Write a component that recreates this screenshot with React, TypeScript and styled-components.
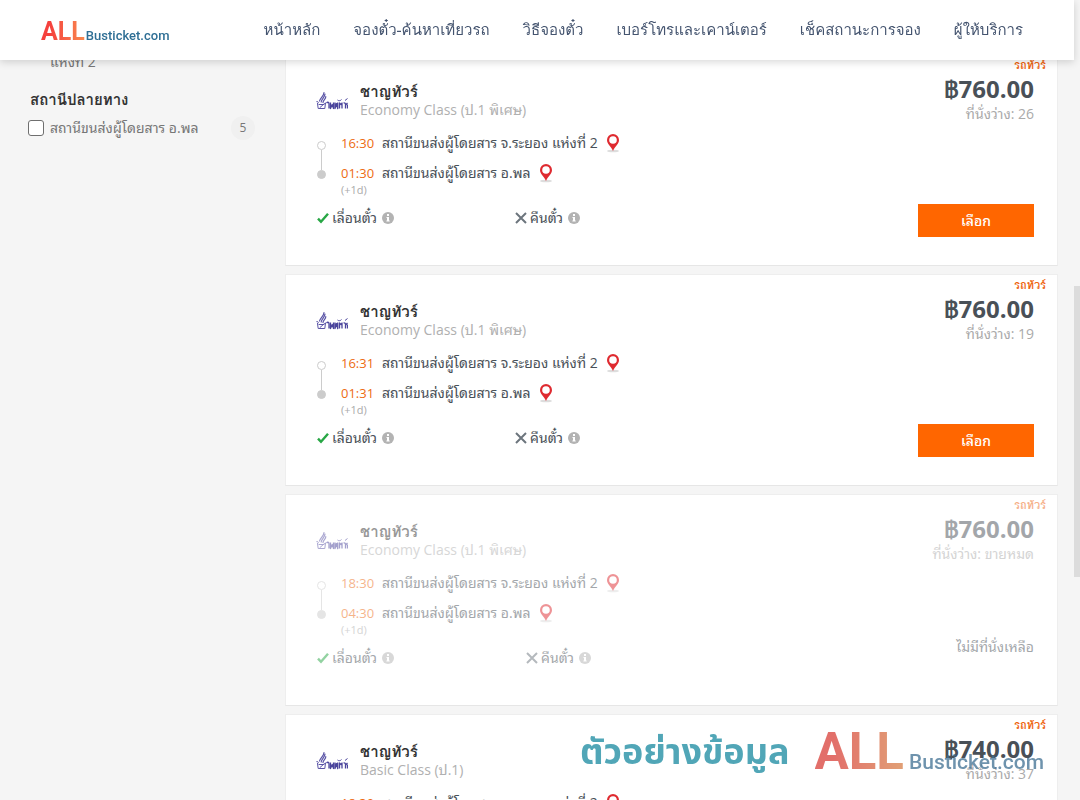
import React from "react";
import styled, { createGlobalStyle } from "styled-components";

const GlobalStyle = createGlobalStyle`
  *, *::before, *::after { box-sizing: border-box; }
  body {
    margin: 0;
    background: #f5f5f5;
    color: #495057;
    font-family: "Open Sans", "Noto Sans Thai Looped", Loma, sans-serif;
    font-size: 14px;
    line-height: 20px;
  }
`;

const Page = styled.div`
  height: 100vh;
  overflow: hidden;
  padding-right: 6px;
`;

const Header = styled.header`
  position: fixed;
  top: 0;
  left: 0;
  right: 6px;
  z-index: 10;
  display: flex;
  align-items: center;
  justify-content: space-between;
  height: 60px;
  padding: 0 51px 0 41px;
  background: #fff;
  box-shadow: 0 2px 8px rgba(0, 0, 0, 0.16);
`;

const Nav = styled.nav`
  display: flex;
  gap: 33px;
`;

const NavLink = styled.a`
  color: #44546f;
  font-family: Loma, sans-serif;
  font-size: 15px;
  line-height: 26px;
  text-decoration: none;
  white-space: nowrap;
`;

const Brand = styled.span<{ $large?: boolean }>`
  display: flex;
  align-items: baseline;
  gap: ${(p) => (p.$large ? 5 : 1)}px;
  padding-top: ${(p) => (p.$large ? 0 : 2)}px;
  font-family: Roboto, sans-serif;
  font-weight: 700;
  line-height: 1;
  text-decoration: none;
`;

const BrandAll = styled.span<{ $large?: boolean }>`
  font-size: ${(p) => (p.$large ? 51 : 25)}px;
  color: transparent;
  background: ${(p) =>
    p.$large
      ? "linear-gradient(90deg, #d83f39 20%, #d78148)"
      : "linear-gradient(90deg, #f5413d 20%, #f98a4f)"};
  background-clip: text;
  -webkit-background-clip: text;
`;

const BrandName = styled.span<{ $large?: boolean }>`
  font-size: ${(p) => (p.$large ? 21 : 13)}px;
  font-weight: 500;
  color: ${(p) => (p.$large ? "#3e6f92" : "#2f6f95")};
`;

const Layout = styled.div`
  display: grid;
  grid-template-columns: 255px minmax(0, 1fr);
  gap: 30px;
  padding: 54px 16px 0 0;
`;

const Sidebar = styled.aside`
  padding-left: 28px;
`;

const FilterTail = styled.div`
  padding: 0 0 0 22px;
  line-height: 16px;
  color: #777;
`;

const FilterTitle = styled.h2`
  margin: 20px 0 6px 2px;
  font-family: Loma, sans-serif;
  font-size: 15px;
  line-height: 20px;
  color: #333;
`;

const FilterRow = styled.label`
  display: flex;
  align-items: center;
  gap: 6px;
  color: #777;
`;

const Checkbox = styled.input`
  appearance: none;
  width: 16px;
  height: 16px;
  margin: 0;
  border: 1px solid #6f6f6f;
  border-radius: 3px;
  background: #fff;
`;

const Count = styled.span`
  width: 24px;
  height: 24px;
  margin-left: auto;
  border-radius: 50%;
  background: #f0f0f0;
  font-size: 12px;
  line-height: 24px;
  text-align: center;
`;

const Trips = styled.main`
  display: flex;
  flex-direction: column;
  gap: 8px;
`;

const Card = styled.article`
  display: flex;
  justify-content: space-between;
  min-height: 212px;
  border: 1px solid #eee;
  border-bottom-color: #e6e6e6;
  background: #fff;
`;

const Details = styled.div<{ $soldOut: boolean }>`
  flex: 1;
  padding: 28px 0 0 30px;
  opacity: ${(p) => (p.$soldOut ? 0.5 : 1)};
`;

const Side = styled.div<{ $soldOut: boolean }>`
  display: flex;
  flex-direction: column;
  align-items: flex-end;
  padding: 3px 23px 28px 0;
  opacity: ${(p) => (p.$soldOut ? 0.5 : 1)};
`;

const Operator = styled.div`
  display: flex;
  align-items: center;
  gap: 12px;
`;

const OperatorName = styled.h3`
  margin: 0;
  font-family: Loma, sans-serif;
  font-size: 15px;
  line-height: 18px;
  color: #333;
`;

const ClassName = styled.p`
  margin: 0;
  line-height: 18px;
  color: #b0b0b0;
`;

const Route = styled.div`
  display: flex;
  gap: 15px;
  margin-top: 12px;
`;

const Track = styled.div`
  display: flex;
  flex-direction: column;
  align-items: center;
  padding: 10px 0 0 1px;
`;

const Dot = styled.span<{ $filled?: boolean }>`
  width: 9px;
  height: 9px;
  border: 1px solid #ccc;
  border-radius: 50%;
  background: ${(p) => (p.$filled ? "#ccc" : "#fff")};
`;

const Line = styled.span`
  width: 1px;
  height: 20px;
  background: #ccc;
`;

const Stops = styled.div`
  display: flex;
  flex-direction: column;
  gap: 6px;
`;

const Stop = styled.div`
  display: grid;
  grid-template-columns: 33px auto auto;
  justify-content: start;
  align-items: center;
  column-gap: 8px;
  line-height: 24px;
`;

const Time = styled.time`
  font-size: 13px;
  color: #ed6c13;
`;

const NextDay = styled.div`
  font-size: 11px;
  line-height: 10px;
  color: #aaa;
`;

const Policies = styled.div<{ $soldOut: boolean }>`
  display: grid;
  grid-template-columns: ${(p) => (p.$soldOut ? 209 : 198)}px auto;
  margin-top: 13px;
`;

const Policy = styled.div`
  display: flex;
  align-items: center;
  gap: 3px;
  padding-left: 1px;

  svg:last-child { margin-left: 2px; }
`;

const Tag = styled.span`
  height: 11px;
  margin-right: -12px;
  overflow: hidden;
  font-family: Loma, sans-serif;
  font-size: 11px;
  font-weight: 700;
  line-height: 14px;
  color: #ee6512;
`;

const Price = styled.strong`
  margin-top: 5px;
  font-family: "Open Sans", Loma, sans-serif;
  font-size: 24px;
  line-height: 30px;
`;

const Seats = styled.span`
  line-height: 20px;
  color: #aaa;
`;

const SelectButton = styled.button`
  width: 116px;
  height: 33px;
  margin-top: auto;
  border: 0;
  background: #ff6600;
  color: #fff;
  font: inherit;
  font-weight: 500;
`;

const NoSeats = styled.span`
  margin: auto 0 20px;
`;

const ScrollTrack = styled.div`
  position: fixed;
  top: 0;
  right: 0;
  bottom: 0;
  width: 6px;
  padding-top: 286px;
  background: #f5f5f5;
`;

const ScrollThumb = styled.div`
  height: 291px;
  background: #dcdcdc;
`;

const Watermark = styled.div`
  position: fixed;
  right: 36px;
  bottom: 23px;
  z-index: 5;
  display: flex;
  align-items: flex-end;
  gap: 25px;
  opacity: 0.75;
  pointer-events: none;
`;

const Notice = styled.span`
  color: #17899f;
  font-family: "Noto Sans", "Noto Sans Thai", sans-serif;
  font-size: 36px;
  font-weight: 700;
  line-height: 52px;
`;

const BrandMark = ({ large }: { large?: boolean }) => (
  <>
    <BrandAll $large={large}>ALL</BrandAll>
    <BrandName $large={large}>Busticket.com</BrandName>
  </>
);

const OperatorLogo = () => (
  <svg width="32" height="20" viewBox="0 0 32 20" aria-hidden="true">
    <g fill="none" stroke="#5a54a6" strokeLinecap="round" strokeLinejoin="round">
      <path d="M3.500 10C4 7 8 5 8 1.500M5.200 11C5.500 8 9 6 9 3M7 11.500C7 9 10 8 9.800 5.500" strokeWidth="1.200" />
      <path d="M.8 10.500c1.500-.5 2 1 1 2M1.500 12.500L2.200 17.500h6.600l.7-5.500M3 13.500h5M4 16.500l4.500-4" />
    </g>
    <g fill="none" stroke="#4b459c" strokeWidth="1.300" strokeLinejoin="round">
      <path d="M10.500 12c1.500-1.500 2.500-.5 2.500 1V17.500M14.500 11.500v6l1.700-4 1.300 4V11.500M19 11.500v6l1.500-5 1.200 5V11.500M23.500 17.500v-5.500l1.500 1.500 1-1.500v5.500M27.500 12c1.500-.5 2 .5 2 1.500v4M31.500 12l-1 1 1 1.500v3" />
      <path d="M21.500 9c1 1 3 1 4-.5M29 9.500l2.500-2" strokeWidth="1" />
    </g>
  </svg>
);

const Pin = () => (
  <svg width="14" height="19" viewBox="0 0 14 19" aria-hidden="true">
    <ellipse cx="7" cy="17" rx="6" ry="1.3" fill="#ddd" />
    <path d="M7 0a6 6 0 0 0-6 6c0 4 4 6 6 11 2-5 6-7 6-11a6 6 0 0 0-6-6z" fill="#df2a30" />
    <circle cx="7" cy="6" r="3.8" fill="#fff" />
  </svg>
);

const Check = () => (
  <svg width="12" height="12" viewBox="0 0 12 12" aria-hidden="true">
    <path d="M1 6.6l3 3.2 7-8" fill="none" stroke="#28a745" strokeWidth="2.4" />
  </svg>
);

const Cross = () => (
  <svg width="12" height="12" viewBox="0 0 12 12" aria-hidden="true">
    <path d="M1 1l10 10M11 1L1 11" fill="none" stroke="#6c757d" strokeWidth="2" />
  </svg>
);

const Info = () => (
  <svg width="12" height="12" viewBox="0 0 12 12" aria-hidden="true">
    <circle cx="6" cy="6" r="6" fill="#b3b3b3" />
    <path d="M5 2h2v2H5zM4.5 5H7v3.4h.7v1.1H4.4V8.400H5V6h-.5z" fill="#fff" />
  </svg>
);

type Trip = {
  depart: string;
  arrive: string;
  service: string;
  price: string;
  seats: string;
  soldOut?: boolean;
};

const trips: Trip[] = [
  { depart: "16:30", arrive: "01:30", service: "Economy Class (ป.1 พิเศษ)", price: "฿760.00", seats: "26" },
  { depart: "16:31", arrive: "01:31", service: "Economy Class (ป.1 พิเศษ)", price: "฿760.00", seats: "19" },
  { depart: "18:30", arrive: "04:30", service: "Economy Class (ป.1 พิเศษ)", price: "฿760.00", seats: "ขายหมด", soldOut: true },
  { depart: "18:30", arrive: "04:30", service: "Basic Class (ป.1)", price: "฿740.00", seats: "37" },
];

const links = [
  "หน้าหลัก",
  "จองตั๋ว-ค้นหาเที่ยวรถ",
  "วิธีจองตั๋ว",
  "เบอร์โทรและเคาน์เตอร์",
  "เช็คสถานะการจอง",
  "ผู้ให้บริการ",
];

const TripCard = ({ trip }: { trip: Trip }) => {
  const soldOut = Boolean(trip.soldOut);
  return (
    <Card>
      <Details $soldOut={soldOut}>
        <Operator>
          <OperatorLogo />
          <div>
            <OperatorName>ชาญทัวร์</OperatorName>
            <ClassName>{trip.service}</ClassName>
          </div>
        </Operator>
        <Route>
          <Track>
            <Dot />
            <Line />
            <Dot $filled />
          </Track>
          <div>
            <Stops>
              <Stop>
                <Time>{trip.depart}</Time>
                <span>สถานีขนส่งผู้โดยสาร จ.ระยอง แห่งที่ 2</span>
                <Pin />
              </Stop>
              <Stop>
                <Time>{trip.arrive}</Time>
                <span>สถานีขนส่งผู้โดยสาร อ.พล</span>
                <Pin />
              </Stop>
            </Stops>
            <NextDay>(+1d)</NextDay>
          </div>
        </Route>
        <Policies $soldOut={soldOut}>
          <Policy>
            <Check />
            <span>เลื่อนตั๋ว</span>
            <Info />
          </Policy>
          <Policy>
            <Cross />
            <span>คืนตั๋ว</span>
            <Info />
          </Policy>
        </Policies>
      </Details>
      <Side $soldOut={soldOut}>
        <Tag>รถทัวร์</Tag>
        <Price>{trip.price}</Price>
        <Seats>ที่นั่งว่าง: {trip.seats}</Seats>
        {soldOut ? <NoSeats>ไม่มีที่นั่งเหลือ</NoSeats> : <SelectButton type="button">เลือก</SelectButton>}
      </Side>
    </Card>
  );
};

export default function App() {
  return (
    <Page>
      <GlobalStyle />
      <Header>
        <Brand as="a" href="#home">
          <BrandMark />
        </Brand>
        <Nav>
          {links.map((label) => (
            <NavLink key={label} href="#menu">{label}</NavLink>
          ))}
        </Nav>
      </Header>
      <Layout>
        <Sidebar>
          <FilterTail>แห่งที่ 2</FilterTail>
          <FilterTitle>สถานีปลายทาง</FilterTitle>
          <FilterRow>
            <Checkbox type="checkbox" />
            <span>สถานีขนส่งผู้โดยสาร อ.พล</span>
            <Count>5</Count>
          </FilterRow>
        </Sidebar>
        <Trips>
          {trips.map((trip, i) => (
            <TripCard key={i} trip={trip} />
          ))}
        </Trips>
      </Layout>
      <Watermark>
        <Notice>ตัวอย่างข้อมูล</Notice>
        <Brand $large>
          <BrandMark large />
        </Brand>
      </Watermark>
      <ScrollTrack>
        <ScrollThumb />
      </ScrollTrack>
    </Page>
  );
}
